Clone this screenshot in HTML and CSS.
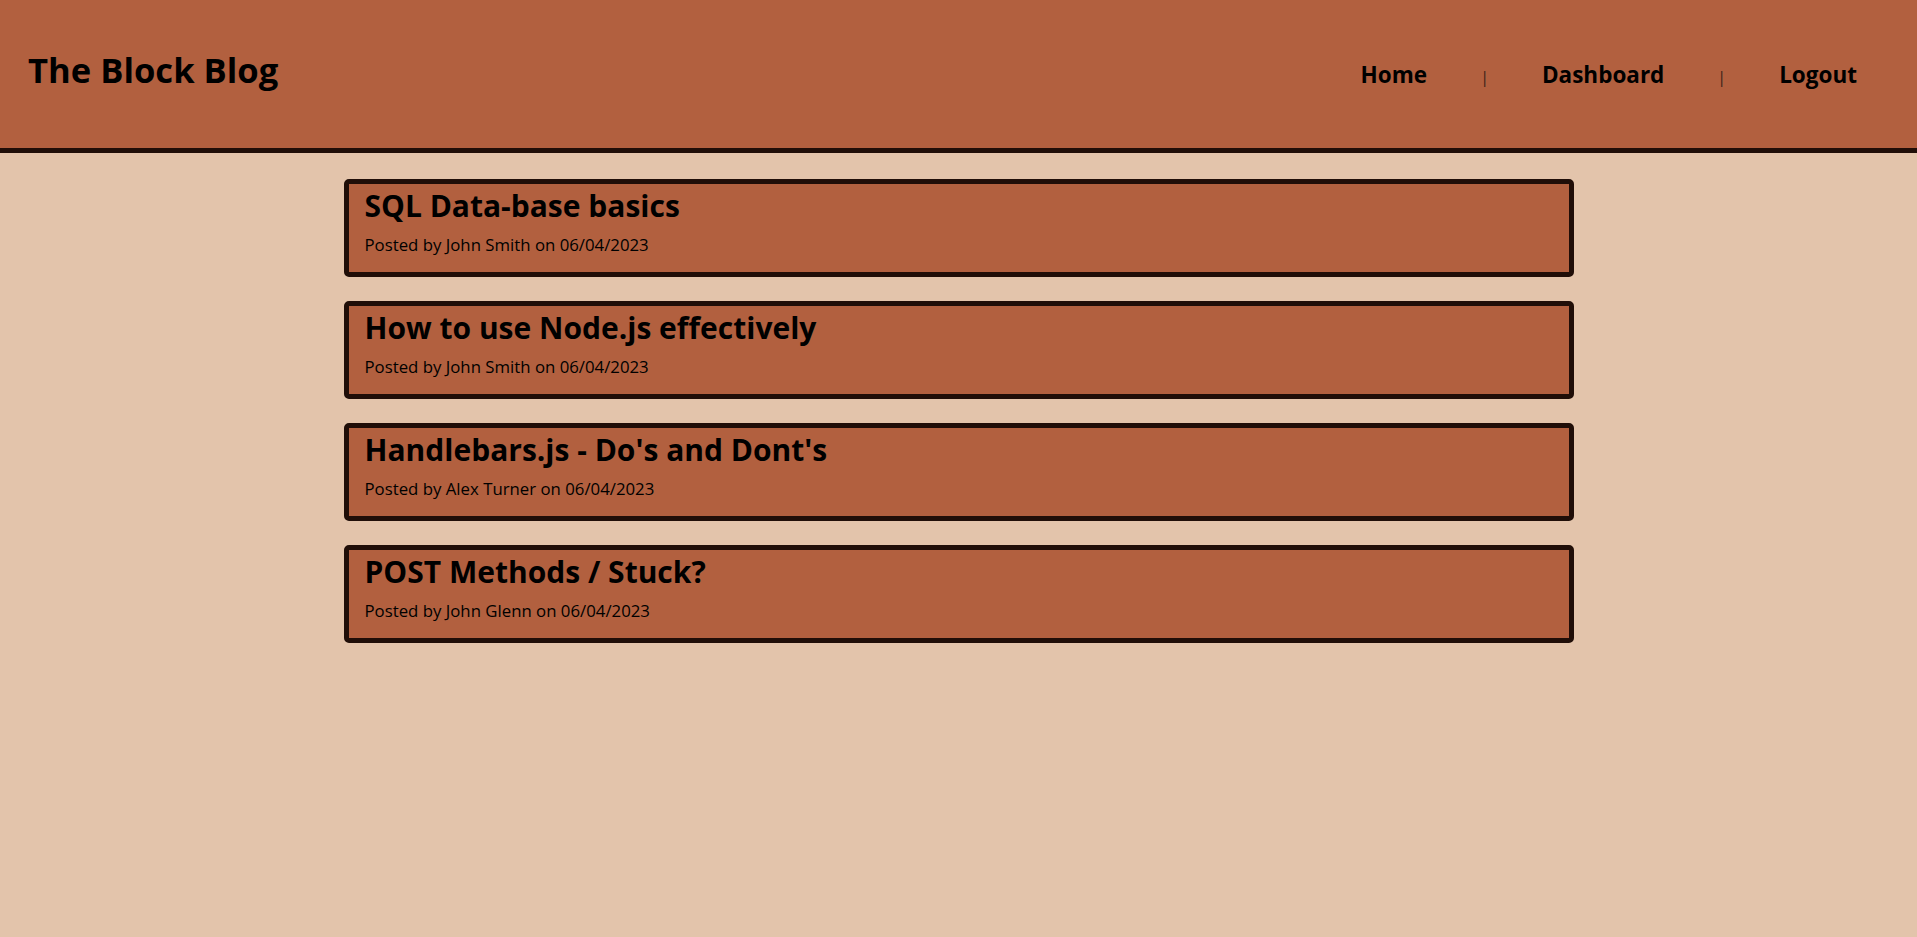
FILE: index.html
```html
<!DOCTYPE html>
<html lang="en">
<head>
  <meta charset="UTF-8">
  <meta name="viewport" content="width=device-width, initial-scale=1.0">
  <title>The Block Blog</title>
  <link rel="stylesheet" href="styles.css">
</head>
<body>
  <!-- 顶部导航 -->
  <header class="topbar">
    <h1 class="brand">The Block Blog</h1>
    <nav class="nav">
      <a href="/">Home</a>
      <span class="sep">|</span>
      <a href="/dashboard">Dashboard</a>
      <span class="sep">|</span>
      <a href="/logout">Logout</a>
    </nav>
  </header>

  <!-- 文章列表 -->
  <main class="posts">
    <article class="post">
      <h2>SQL Data-base basics</h2>
      <p>Posted by John Smith on 06/04/2023</p>
    </article>
    <article class="post">
      <h2>How to use Node.js effectively</h2>
      <p>Posted by John Smith on 06/04/2023</p>
    </article>
    <article class="post">
      <h2>Handlebars.js - Do's and Dont's</h2>
      <p>Posted by Alex Turner on 06/04/2023</p>
    </article>
    <article class="post">
      <h2>POST Methods / Stuck?</h2>
      <p>Posted by John Glenn on 06/04/2023</p>
    </article>
  </main>
</body>
</html>
```

FILE: styles.css
```css
/* 基本样式 */
body {
  margin: 0;
  font-family: "Open Sans", "Noto Sans", sans-serif;
  background-color: #e3c4ab;
  color: #000;
  min-height: 100vh;
}

/* 头部 */
.topbar {
  display: flex;
  justify-content: space-between;
  align-items: baseline;
  height: 153px;
  box-sizing: border-box;
  padding: 46px 60px 0 28px;
  background-color: #b2603f;
  border-bottom: 5px solid #200e08;
}

.brand {
  margin: 0;
  font-size: 34.6px;
  font-weight: 700;
}

.nav {
  display: flex;
  align-items: baseline;
  gap: 53px;
}

.nav a {
  color: #000;
  text-decoration: none;
  font-size: 22.5px;
  font-weight: 700;
}

.nav .sep {
  font-size: 16px;
  color: #3b2218;
}

/* 文章卡片 */
.posts {
  display: flex;
  flex-direction: column;
  align-items: center;
  gap: 24px;
  padding-top: 26px;
}

.post {
  width: 1230px;
  height: 98px;
  box-sizing: border-box;
  padding: 0 16px;
  background-color: #b2603f;
  border: 5px solid #200e08;
  border-radius: 5px;
}

.post h2 {
  margin: 0;
  font-size: 30px;
  line-height: 43px;
  font-weight: 700;
}

.post p {
  margin: 6px 0 0;
  font-size: 16.8px;
}
```
